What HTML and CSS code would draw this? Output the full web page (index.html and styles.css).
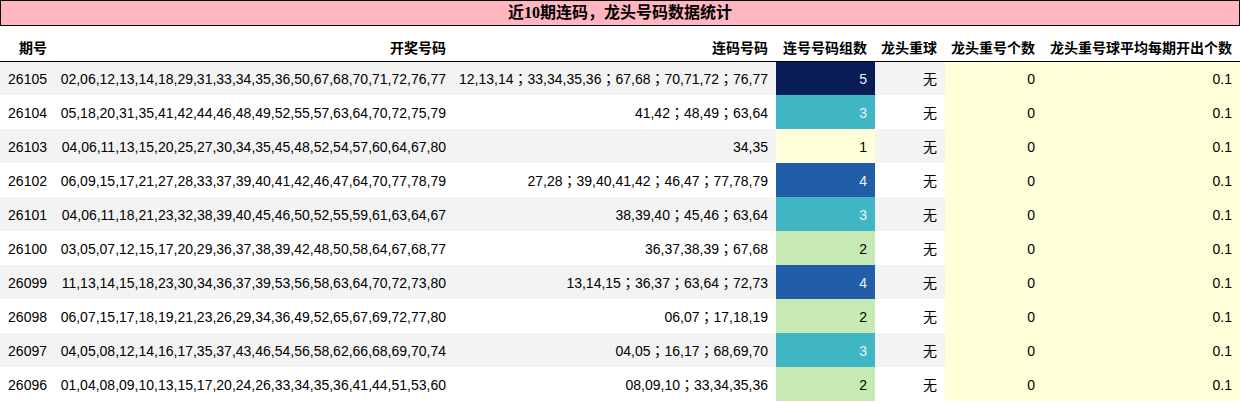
FILE: index.html
```html
<!DOCTYPE html>
<html lang="zh">
<head>
<meta charset="utf-8">
<title>近10期连码，龙头号码数据统计</title>
<link rel="stylesheet" href="styles.css">
</head>
<body>
<div class="title">近10期连码，龙头号码数据统计</div>
<table class="stats">
  <colgroup>
    <col class="c1"><col class="c2"><col class="c3"><col class="c4"><col class="c5"><col class="c6"><col class="c7">
  </colgroup>
  <thead>
    <tr><th>期号</th><th>开奖号码</th><th>连码号码</th><th>连号号码组数</th><th>龙头重球</th><th>龙头重号个数</th><th>龙头重号球平均每期开出个数</th></tr>
  </thead>
  <tbody>
    <tr><td>26105</td><td>02,06,12,13,14,18,29,31,33,34,35,36,50,67,68,70,71,72,76,77</td><td class="lm">12,13,14；33,34,35,36；67,68；70,71,72；76,77</td><td class="g5">5</td><td>无</td><td class="y">0</td><td class="y">0.1</td></tr>
    <tr><td>26104</td><td>05,18,20,31,35,41,42,44,46,48,49,52,55,57,63,64,70,72,75,79</td><td class="lm">41,42；48,49；63,64</td><td class="g3">3</td><td>无</td><td class="y">0</td><td class="y">0.1</td></tr>
    <tr><td>26103</td><td>04,06,11,13,15,20,25,27,30,34,35,45,48,52,54,57,60,64,67,80</td><td class="lm">34,35</td><td class="g1">1</td><td>无</td><td class="y">0</td><td class="y">0.1</td></tr>
    <tr><td>26102</td><td>06,09,15,17,21,27,28,33,37,39,40,41,42,46,47,64,70,77,78,79</td><td class="lm">27,28；39,40,41,42；46,47；77,78,79</td><td class="g4">4</td><td>无</td><td class="y">0</td><td class="y">0.1</td></tr>
    <tr><td>26101</td><td>04,06,11,18,21,23,32,38,39,40,45,46,50,52,55,59,61,63,64,67</td><td class="lm">38,39,40；45,46；63,64</td><td class="g3">3</td><td>无</td><td class="y">0</td><td class="y">0.1</td></tr>
    <tr><td>26100</td><td>03,05,07,12,15,17,20,29,36,37,38,39,42,48,50,58,64,67,68,77</td><td class="lm">36,37,38,39；67,68</td><td class="g2">2</td><td>无</td><td class="y">0</td><td class="y">0.1</td></tr>
    <tr><td>26099</td><td>11,13,14,15,18,23,30,34,36,37,39,53,56,58,63,64,70,72,73,80</td><td class="lm">13,14,15；36,37；63,64；72,73</td><td class="g4">4</td><td>无</td><td class="y">0</td><td class="y">0.1</td></tr>
    <tr><td>26098</td><td>06,07,15,17,18,19,21,23,26,29,34,36,49,52,65,67,69,72,77,80</td><td class="lm">06,07；17,18,19</td><td class="g2">2</td><td>无</td><td class="y">0</td><td class="y">0.1</td></tr>
    <tr><td>26097</td><td>04,05,08,12,14,16,17,35,37,43,46,54,56,58,62,66,68,69,70,74</td><td class="lm">04,05；16,17；68,69,70</td><td class="g3">3</td><td>无</td><td class="y">0</td><td class="y">0.1</td></tr>
    <tr><td>26096</td><td>01,04,08,09,10,13,15,17,20,24,26,33,34,35,36,41,44,51,53,60</td><td class="lm">08,09,10；33,34,35,36</td><td class="g2">2</td><td>无</td><td class="y">0</td><td class="y">0.1</td></tr>
  </tbody>
</table>
</body>
</html>
```
FILE: styles.css
```css
html, body {
  margin: 0;
  padding: 0;
  background: #ffffff;
}

body {
  width: 1240px;
  font-family: "Liberation Sans", "Noto Sans CJK SC", sans-serif;
  color: #000;
}

.title {
  box-sizing: border-box;
  height: 26px;
  border: 1px solid #000;
  background: #ffb6c1;
  text-align: center;
  font-family: "Liberation Serif", "Noto Sans CJK SC", serif;
  font-weight: bold;
  font-size: 16px;
  line-height: 23px;
}

.stats {
  width: 1240px;
  table-layout: fixed;
  border-collapse: collapse;
  border-spacing: 0;
  font-size: 14px;
}

.c1 { width: 55px; }
.c2 { width: 399px; }
.c3 { width: 322px; }
.c4 { width: 99px; }
.c5 { width: 70px; }
.c6 { width: 98px; }
.c7 { width: 197px; }

.stats th {
  height: 35px;
  box-sizing: border-box;
  padding: 7px 8px 0 0;
  text-align: right;
  font-weight: bold;
  font-size: 14px;
  border-bottom: 1px solid #000;
  white-space: nowrap;
}

.stats td {
  height: 34px;
  box-sizing: border-box;
  padding: 2px 8px 0 0;
  text-align: right;
  white-space: nowrap;
  line-height: 20px;
}

.stats td.lm {
  font-family: "Liberation Sans", "Noto Sans CJK TC", sans-serif;
}

.stats tbody tr:nth-child(odd) { background: #f3f3f3; }
.stats tbody tr:nth-child(even) { background: #ffffff; }

.stats td.y { background: #ffffd9; }
.stats td.g1 { background: #ffffd9; color: #000; }
.stats td.g2 { background: #c7e9b4; color: #000; }
.stats td.g3 { background: #41b6c4; color: #f1f1f1; }
.stats td.g4 { background: #225ea8; color: #f1f1f1; }
.stats td.g5 { background: #081d58; color: #f1f1f1; }
```
